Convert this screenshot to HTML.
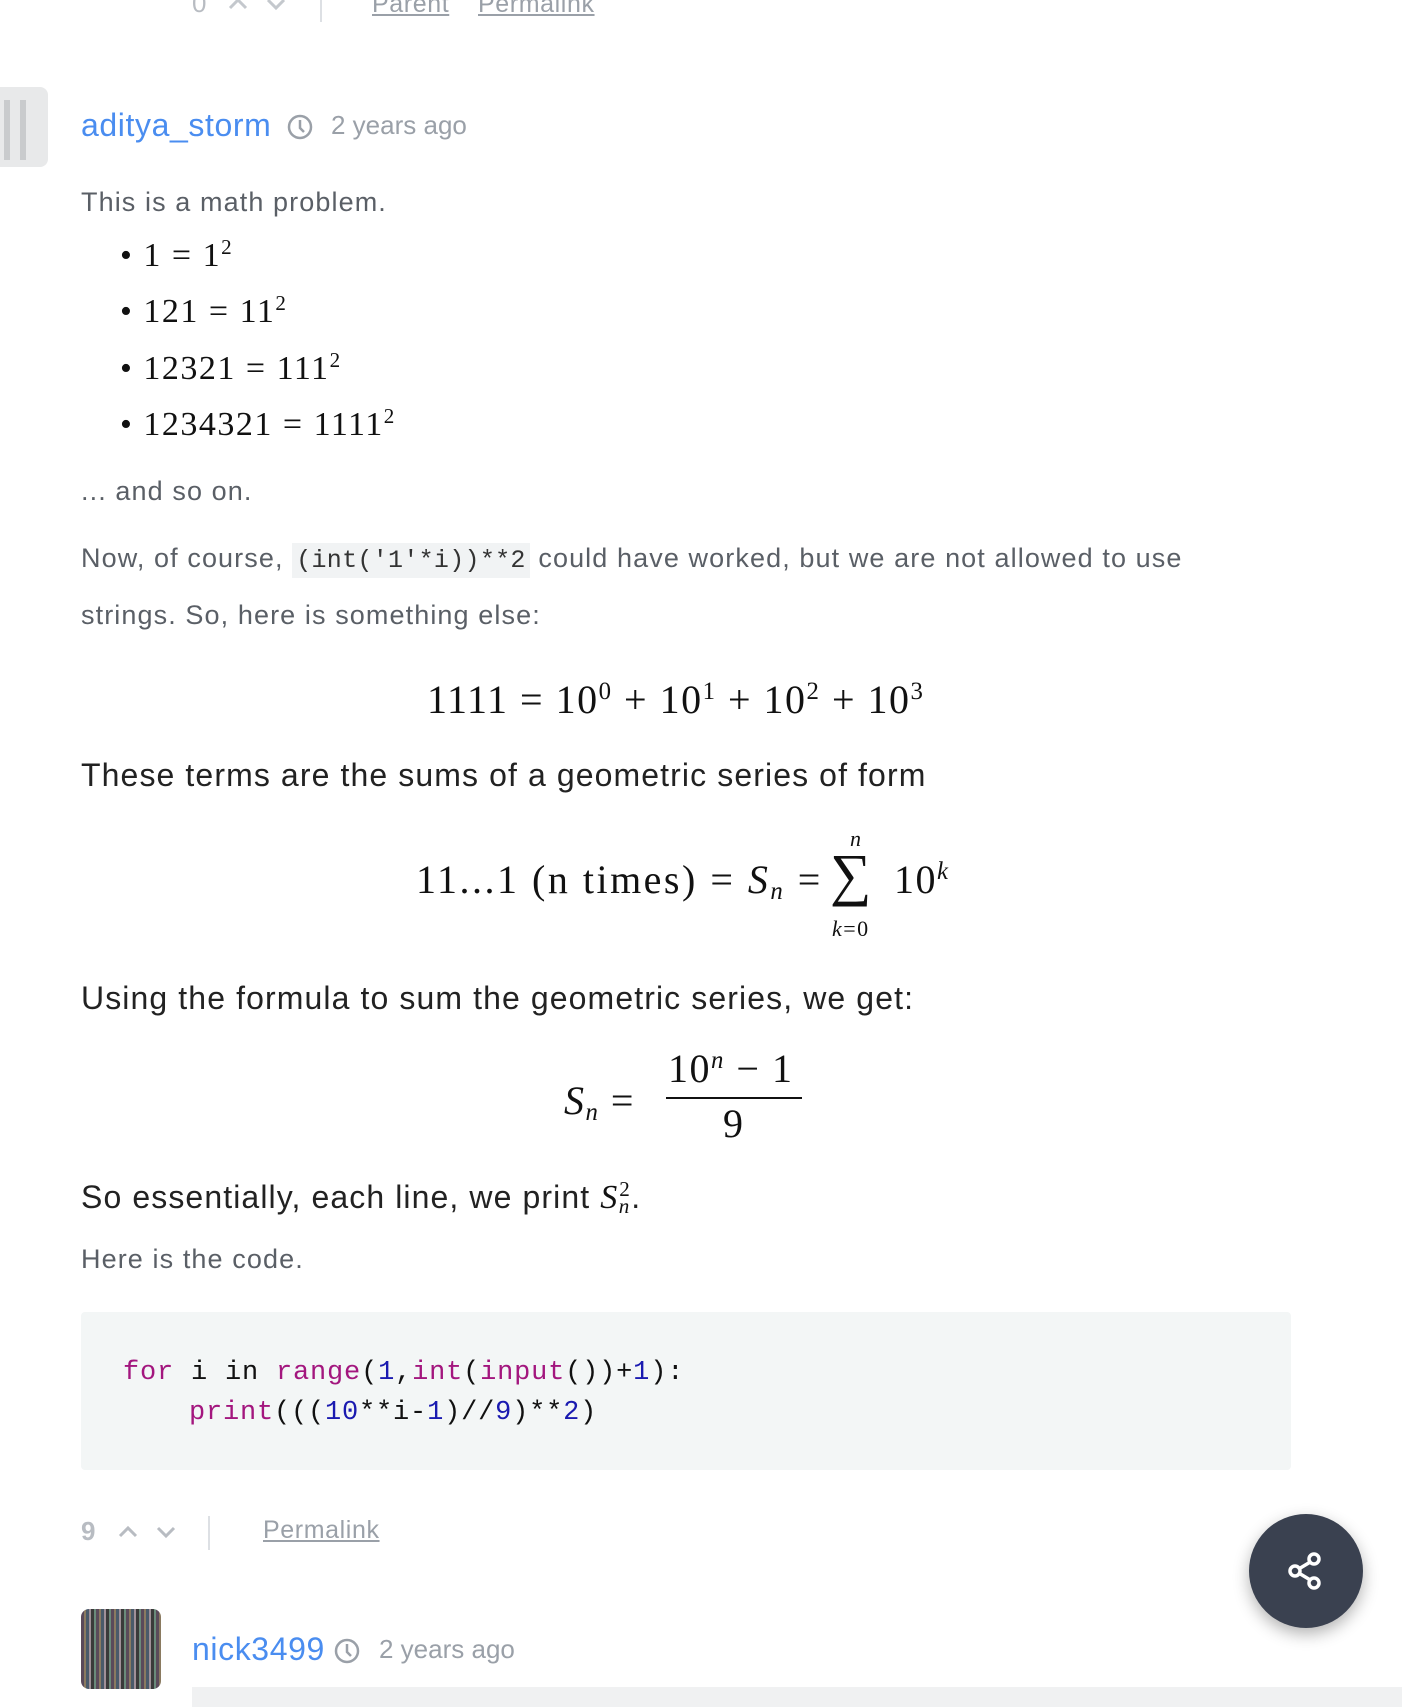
<!DOCTYPE html>
<html><head><meta charset="utf-8"><style>
*{margin:0;padding:0;box-sizing:border-box}
body{width:1424px;height:1702px;background:#fff;position:relative;overflow:hidden;font-family:"Liberation Sans",sans-serif}
.a{position:absolute;white-space:nowrap;line-height:1}
.g{color:#5a5f66;font-size:27px;letter-spacing:1.1px}
.d{color:#222;font-size:32px;letter-spacing:1.1px}
.m{font-family:"Liberation Serif","DejaVu Serif",serif;color:#111;letter-spacing:1.5px}
.m i{font-style:italic}
sup{font-size:62%;vertical-align:0;position:relative;top:-0.55em}
sub{font-size:62%;vertical-align:0;position:relative;top:0.25em}
.code{font-family:"Liberation Mono",monospace;font-size:27px;letter-spacing:0.8px;color:#111}
.k{color:#a3167e}.n{color:#1a1ab0}
.lnk{color:#9aa0a8;text-decoration:underline;font-size:25px;letter-spacing:0.6px}
.vote{color:#b8bcc2;font-size:26px}
</style></head><body>

<div class="a vote" style="left:192px;top:-10px">0</div>
<svg class="a" style="left:226px;top:-6px" width="62" height="22" viewBox="0 0 62 22"><path d="M4 14l8-8 8 8M42 6l8 8 8-8" fill="none" stroke="#c4c8cd" stroke-width="3"/></svg>
<div class="a" style="left:320px;top:0;width:2px;height:22px;background:#dde0e4"></div>
<div class="a lnk" style="left:372px;top:-8px">Parent</div>
<div class="a lnk" style="left:478px;top:-8px">Permalink</div>

<div class="a" style="left:0;top:87px;width:48px;height:80px;background:#e8e9ea;border-radius:0 8px 8px 0"></div>
<div class="a" style="left:4px;top:100px;width:22px;height:60px;border-left:6px solid #c9cbcd;border-right:6px solid #c9cbcd"></div>

<div class="a" style="left:81px;top:109px;font-size:32px;letter-spacing:0.6px;color:#4a8df0">aditya_storm</div>
<svg class="a" style="left:286px;top:113px" width="28" height="28" viewBox="0 0 28 28"><circle cx="14" cy="14" r="11" fill="none" stroke="#9aa0a8" stroke-width="2.5"/><path d="M14 7v8l4 4" fill="none" stroke="#9aa0a8" stroke-width="2.5"/></svg>
<div class="a" style="left:331px;top:112px;font-size:26px;color:#9aa0a8">2 years ago</div>

<div class="a g" style="left:81px;top:189px">This is a math problem.</div>
<div class="a m" style="left:120px;top:239px;font-size:34px">•&nbsp;1 = 1<sup>2</sup></div>
<div class="a m" style="left:120px;top:295px;font-size:34px">•&nbsp;121 = 11<sup>2</sup></div>
<div class="a m" style="left:120px;top:352px;font-size:34px">•&nbsp;12321 = 111<sup>2</sup></div>
<div class="a m" style="left:120px;top:408px;font-size:34px">•&nbsp;1234321 = 1111<sup>2</sup></div>

<div class="a g" style="left:81px;top:478px">... and so on.</div>
<div class="a g" style="left:81px;top:545px">Now, of course, <span style="font-family:'Liberation Mono',monospace;background:#f1f3f4;color:#333;padding:3px 4px;font-size:25px;letter-spacing:0.3px">(int('1'*i))**2</span> could have worked, but we are not allowed to use</div>
<div class="a g" style="left:81px;top:602px">strings. So, here is something else:</div>

<div class="a m" style="left:427px;top:680px;font-size:40px">1111 = 10<sup>0</sup> + 10<sup>1</sup> + 10<sup>2</sup> + 10<sup>3</sup></div>

<div class="a d" style="left:81px;top:759px">These terms are the sums of a geometric series of form</div>

<div class="a m" style="left:416px;top:860px;font-size:40px;letter-spacing:2.5px">11...1 (n times) = <i>S</i><sub><i>n</i></sub> =</div>
<div class="a m" style="left:830px;top:846px;font-size:58px">∑</div>
<div class="a m" style="left:850px;top:828px;font-size:22px"><i>n</i></div>
<div class="a m" style="left:832px;top:918px;font-size:22px"><i>k</i>=0</div>
<div class="a m" style="left:894px;top:860px;font-size:40px">10<sup><i>k</i></sup></div>

<div class="a d" style="left:81px;top:982px">Using the formula to sum the geometric series, we get:</div>

<div class="a m" style="left:564px;top:1081px;font-size:40px"><i>S</i><sub><i>n</i></sub> =</div>
<div class="a m" style="left:668px;top:1049px;font-size:40px">10<sup><i>n</i></sup> − 1</div>
<div class="a" style="left:666px;top:1097px;width:136px;height:2px;background:#111"></div>
<div class="a m" style="left:723px;top:1104px;font-size:40px">9</div>

<div class="a d" style="left:81px;top:1181px">So essentially, each line, we print <span class="m" style="font-size:34px"><i>S</i><sub><i>n</i></sub><sup style="margin-left:-0.55em">2</sup></span>.</div>
<div class="a g" style="left:81px;top:1246px">Here is the code.</div>

<div class="a" style="left:81px;top:1312px;width:1210px;height:158px;background:#f3f6f6;border-radius:4px"></div>
<div class="a code" style="left:123px;top:1360px"><span class="k">for</span> i in <span class="k">range</span>(<span class="n">1</span>,<span class="k">int</span>(<span class="k">input</span>())+<span class="n">1</span>):</div>
<div class="a code" style="left:189px;top:1400px"><span class="k">print</span>(((<span class="n">10</span>**i-<span class="n">1</span>)//<span class="n">9</span>)**<span class="n">2</span>)</div>

<div class="a vote" style="left:81px;top:1518px;font-weight:bold">9</div>
<svg class="a" style="left:116px;top:1520px" width="60" height="24" viewBox="0 0 60 24"><path d="M4 16l8-8 8 8M42 8l8 8 8-8" fill="none" stroke="#b8bcc2" stroke-width="3"/></svg>
<div class="a" style="left:208px;top:1516px;width:2px;height:34px;background:#dde0e4"></div>
<div class="a lnk" style="left:263px;top:1518px">Permalink</div>

<div class="a" style="left:1249px;top:1514px;width:114px;height:114px;border-radius:50%;background:#3a4150;box-shadow:0 6px 16px rgba(0,0,0,.3)"></div>
<svg class="a" style="left:1284px;top:1549px" width="44" height="44" viewBox="0 0 44 44"><g fill="none" stroke="#fff" stroke-width="3.5"><circle cx="30" cy="10" r="5"/><circle cx="11" cy="22" r="5"/><circle cx="30" cy="34" r="5"/><path d="M15.5 19.5l10-6M15.5 24.5l10 6"/></g></svg>

<div class="a" style="left:81px;top:1609px;width:80px;height:80px;border-radius:8px;background:repeating-linear-gradient(90deg,#5a4a5a 0 3px,#8a7a60 3px 5px,#4a5a6a 5px 8px,#a09098 8px 10px,#3a3a3a 10px 13px,#6a8a7a 13px 15px)"></div>
<div class="a" style="left:192px;top:1633px;font-size:32px;letter-spacing:0.6px;color:#4a8df0">nick3499</div>
<svg class="a" style="left:333px;top:1637px" width="28" height="28" viewBox="0 0 28 28"><circle cx="14" cy="14" r="11" fill="none" stroke="#9aa0a8" stroke-width="2.5"/><path d="M14 7v8l4 4" fill="none" stroke="#9aa0a8" stroke-width="2.5"/></svg>
<div class="a" style="left:379px;top:1636px;font-size:26px;color:#9aa0a8">2 years ago</div>
<div class="a" style="left:192px;top:1687px;width:1210px;height:20px;background:#f0f1f2"></div>
</body></html>
